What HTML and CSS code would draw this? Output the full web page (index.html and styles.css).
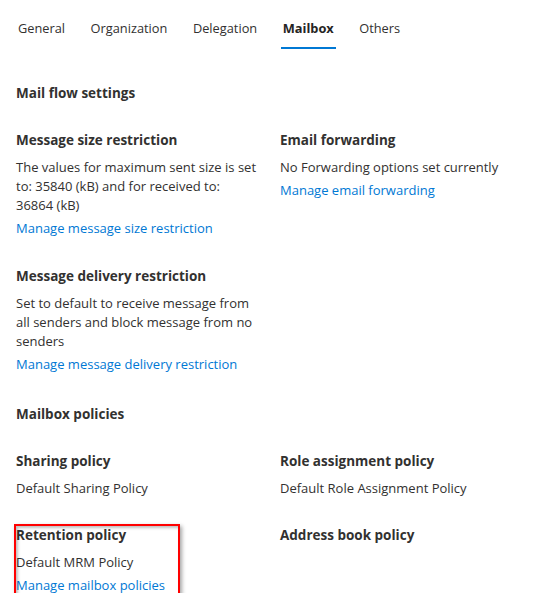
FILE: index.html
```html
<!DOCTYPE html>
<html>
<head>
<meta charset="utf-8">
<link rel="stylesheet" href="styles.css">
</head>
<body>
<nav class="tabs">
  <span class="tab">General</span>
  <span class="tab">Organization</span>
  <span class="tab">Delegation</span>
  <span class="tab active">Mailbox</span>
  <span class="tab">Others</span>
</nav>
<main class="content">
  <h2 class="section-title">Mail flow settings</h2>
  <div class="grid flow">
    <div class="field">
      <h3 class="field-title">Message size restriction</h3>
      <p class="field-text">The values for maximum sent size is set to: 35840 (kB) and for received to:<br>36864 (kB)</p>
      <a class="field-link">Manage message size restriction</a>
    </div>
    <div class="field">
      <h3 class="field-title">Email forwarding</h3>
      <p class="field-text">No Forwarding options set currently</p>
      <a class="field-link">Manage email forwarding</a>
    </div>
    <div class="field">
      <h3 class="field-title">Message delivery restriction</h3>
      <p class="field-text">Set to default to receive message from all senders and block message from no senders</p>
      <a class="field-link">Manage message delivery restriction</a>
    </div>
  </div>
  <h2 class="section-title">Mailbox policies</h2>
  <div class="grid policies">
    <div class="field">
      <h3 class="field-title">Sharing policy</h3>
      <p class="field-text">Default Sharing Policy</p>
    </div>
    <div class="field">
      <h3 class="field-title">Role assignment policy</h3>
      <p class="field-text">Default Role Assignment Policy</p>
    </div>
    <div class="field highlighted">
      <h3 class="field-title">Retention policy</h3>
      <p class="field-text">Default MRM Policy</p>
      <a class="field-link">Manage mailbox policies</a>
    </div>
    <div class="field">
      <h3 class="field-title">Address book policy</h3>
    </div>
  </div>
</main>
</body>
</html>
```
FILE: styles.css
```css
* { box-sizing: border-box; }
html, body {
  margin: 0;
  padding: 0;
  background: #ffffff;
  font-family: "Open Sans", "Noto Sans", sans-serif;
  font-size: 13px;
  color: #323130;
  overflow: hidden;
}
.tabs {
  display: flex;
  padding: 0 0 0 5.25px;
}
.tab {
  position: relative;
  padding: 18px 12.75px 11px;
  line-height: 20px;
  font-size: 12.8px;
  color: #323130;
}
.tab.active {
  font-weight: 700;
  color: #252423;
}
.tab.active::after {
  content: "";
  position: absolute;
  left: 10.75px;
  right: 10.75px;
  bottom: 0;
  height: 2px;
  background: #0078d4;
}
.content {
  padding: 34px 16px 0;
}
.section-title {
  margin: 0 0 27px;
  font-size: 13.5px;
  font-weight: 700;
  line-height: 20px;
}
.grid {
  display: grid;
  grid-template-columns: 248px 248px;
  column-gap: 16px;
}
.flow {
  row-gap: 28px;
  margin-bottom: 30px;
}
.policies {
  row-gap: 27px;
}
.field {
  display: flex;
  flex-direction: column;
  align-items: flex-start;
}
.field-title {
  margin: 0 0 8px;
  font-size: 13.5px;
  font-weight: 700;
  line-height: 20px;
}
.field-text {
  margin: 0;
  line-height: 19px;
}
.field-link {
  margin-top: 3px;
  line-height: 20px;
  color: #0078d4;
  text-decoration: none;
}
.highlighted {
  position: relative;
}
.highlighted::after {
  content: "";
  position: absolute;
  left: -2px;
  top: -1px;
  width: 162px;
  height: 69px;
  border: 2px solid #ff0000;
  box-shadow: 2px 2px 4px rgba(0,0,0,0.35), inset 2px 2px 3px rgba(0,0,0,0.25);
}
```
